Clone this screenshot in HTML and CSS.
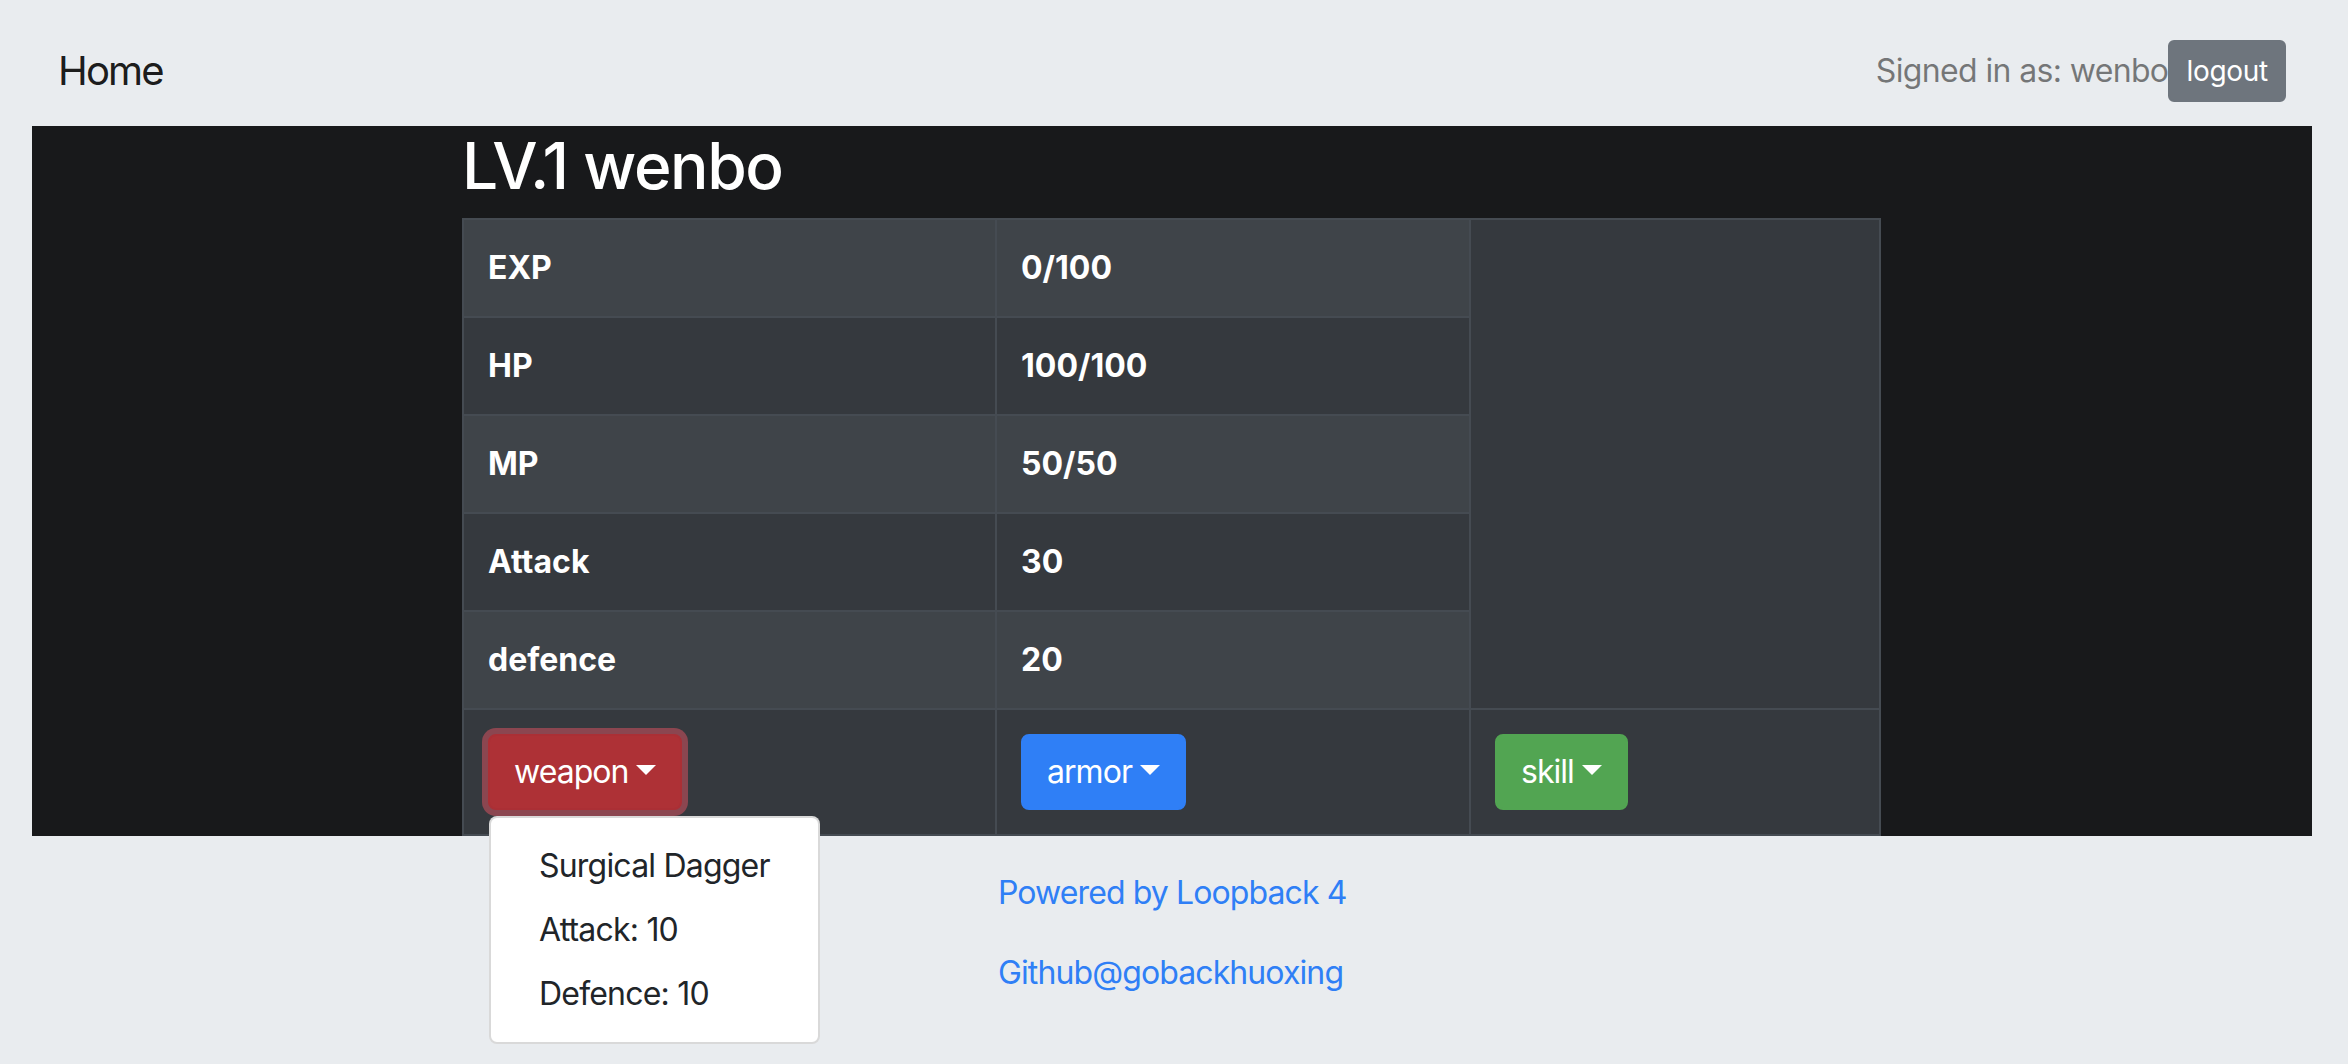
FILE: index.html
```html
<!DOCTYPE html>
<html lang="en">
<head>
<meta charset="utf-8">
<title>LV.1 wenbo</title>
<link rel="stylesheet" href="styles.css">
</head>
<body>
<header class="navbar">
  <a class="brand" href="#">Home</a>
  <div class="user">
    <span class="signed">Signed in as: wenbo</span>
    <button class="btn btn-sm btn-secondary">logout</button>
  </div>
</header>
<main class="stage">
  <div class="hero">
    <h1 class="title">LV.1 wenbo</h1>
    <table class="stats">
      <colgroup><col class="c1"><col class="c2"><col class="c3"></colgroup>
      <tbody>
        <tr class="striped"><th>EXP</th><td>0/100</td><td class="blank" rowspan="5"></td></tr>
        <tr><th>HP</th><td>100/100</td></tr>
        <tr class="striped"><th>MP</th><td>50/50</td></tr>
        <tr><th>Attack</th><td>30</td></tr>
        <tr class="striped"><th>defence</th><td>20</td></tr>
        <tr class="actions">
          <td>
            <div class="dropdown">
              <button class="btn btn-danger is-open">weapon<span class="caret"></span></button>
              <div class="menu">
                <div class="menu-item">Surgical Dagger</div>
                <div class="menu-item">Attack: 10</div>
                <div class="menu-item">Defence: 10</div>
              </div>
            </div>
          </td>
          <td><div class="dropdown"><button class="btn btn-primary">armor<span class="caret"></span></button></div></td>
          <td><div class="dropdown"><button class="btn btn-success">skill<span class="caret"></span></button></div></td>
        </tr>
      </tbody>
    </table>
  </div>
</main>
<footer class="footer">
  <a class="link" href="#">Powered by Loopback 4</a>
  <a class="link" href="#">Github@gobackhuoxing</a>
</footer>
</body>
</html>
```

FILE: styles.css
```css
* { box-sizing: border-box; }

html, body {
  margin: 0;
  padding: 0;
}

body {
  background: #e9ecef;
  font-family: Inter, "Liberation Sans", Arial, sans-serif;
  font-size: 32px;
  line-height: 48px;
  letter-spacing: -0.028em;
  color: #212529;
  width: 2348px;
  height: 1064px;
  overflow: hidden;
}

/* ---------- navbar ---------- */
.navbar {
  height: 126px;
  padding: 16px 62px 0 58px;
  display: flex;
  align-items: center;
  justify-content: space-between;
}

.brand {
  font-size: 40px;
  line-height: 60px;
  letter-spacing: -0.045em;
  color: rgba(0, 0, 0, 0.9);
  text-decoration: none;
}

.user {
  display: flex;
  align-items: center;
}

.signed {
  color: rgba(0, 0, 0, 0.5);
  font-size: 32px;
  line-height: 48px;
  letter-spacing: -0.02em;
}

/* ---------- buttons ---------- */
.btn {
  display: inline-block;
  font-family: inherit;
  font-size: 32px;
  line-height: 48px;
  letter-spacing: -0.03em;
  padding: 12px 24px;
  border: 2px solid transparent;
  border-radius: 8px;
  color: #fff;
  cursor: pointer;
  white-space: nowrap;
}

.btn-sm {
  font-size: 28px;
  line-height: 42px;
  letter-spacing: -0.01em;
  padding: 8px 16px;
  border-radius: 6px;
}

.btn-secondary { background: #6e757d; border-color: #6e757d; }
.btn-danger { background: #ae3136; border-color: #ab2f35; }
.btn-primary { background: #2f7ff6; border-color: #2f7ff6; }
.btn-success { background: #52a552; border-color: #52a552; }

.btn.is-open {
  box-shadow: 0 0 0 6px rgba(225, 83, 97, 0.5);
}

.caret {
  display: inline-block;
  margin-left: 8px;
  vertical-align: 8px;
  border-top: 10px solid #fff;
  border-left: 10px solid transparent;
  border-right: 10px solid transparent;
  border-bottom: 0;
}

/* ---------- dark stage ---------- */
.stage {
  margin: 0 36px 0 32px;
  background: #18191b;
}

.hero {
  padding-left: 430px;
}

.title {
  margin: 0 0 14px;
  padding-top: 1px;
  font-size: 64px;
  line-height: 77px;
  font-weight: 500;
  color: #fff;
  letter-spacing: -1.4px;
}

.stats {
  width: 1419px;
  table-layout: fixed;
  border-collapse: separate;
  border-spacing: 0;
  border-top: 2px solid #454b52;
  border-left: 2px solid #454b52;
  background: #35393e;
  color: #fff;
  letter-spacing: 0;
}

.c1 { width: 533px; }
.c2 { width: 474px; }
.c3 { width: 410px; }

.stats th,
.stats td {
  padding: 24px;
  text-align: left;
  vertical-align: top;
  font-weight: 700;
  border-right: 2px solid #454b52;
  border-bottom: 2px solid #454b52;
}

.stats tr.striped th,
.stats tr.striped td {
  background: #3f4449;
}

.stats tr.striped td.blank {
  background: #35393e;
}

.actions td {
  background: #35393e;
}

.dropdown {
  position: relative;
  display: inline-block;
}

.menu {
  position: absolute;
  top: calc(100% + 6px);
  left: 1px;
  z-index: 10;
  background: #fff;
  border: 2px solid rgba(0, 0, 0, 0.15);
  border-radius: 8px;
  padding: 16px 0;
  white-space: nowrap;
}

.menu-item {
  padding: 8px 48px;
  line-height: 48px;
  font-size: 32px;
  font-weight: 400;
  letter-spacing: -0.025em;
  color: #212529;
}

/* ---------- footer ---------- */
.footer {
  padding: 33px 0 0 998px;
  display: flex;
  flex-direction: column;
  align-items: flex-start;
  gap: 32px;
}

.link {
  color: #2f7ff6;
  text-decoration: none;
  font-size: 32px;
  line-height: 48px;
}
```
